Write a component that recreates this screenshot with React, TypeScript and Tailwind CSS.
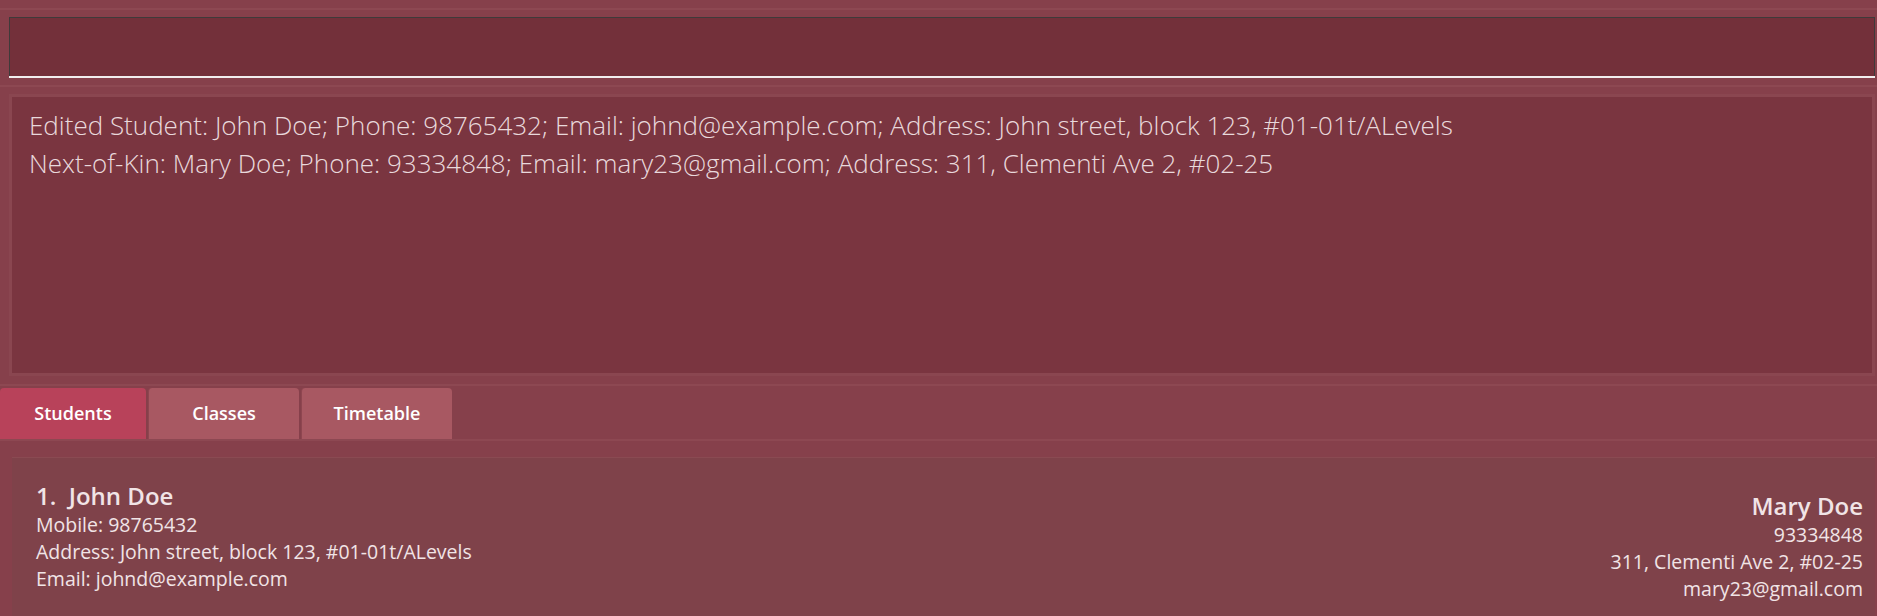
const tabs = ["Students", "Classes", "Timetable"];

function Tab({ label, active }: { label: string; active?: boolean }) {
  return (
    <div
      className={
        "h-[51px] flex items-center justify-center rounded-t-[4px] text-[18px] font-semibold text-white " +
        (active ? "w-[146px] bg-[#b8425a]" : "w-[151px] bg-[#a85862] border-l border-[#8e4650]")
      }
    >
      {label}
    </div>
  );
}

export default function App() {
  return (
    <div
      className="w-full h-[616px] overflow-hidden bg-[#86404b] flex flex-col"
      style={{ fontFamily: '"Open Sans", "Noto Sans", sans-serif' }}
    >
      {/* command box */}
      <div className="mt-[8px] border-t-2 border-[#8d4852] pt-[7px] pl-[9px] pr-[2px]">
        <div className="h-[59px] bg-[#73303a] border border-[#3f3a3a] border-b-0">
          <div className="h-full" />
        </div>
        <div className="h-[2px] bg-[#f2eeee]" />
      </div>

      {/* result display */}
      <div className="mt-[7px] border-t-2 border-[#8d4852] pt-[7px] pl-[9px] pr-[2px]">
        <div className="h-[282px] border-[3px] border-[#8a4650] bg-[#7a3540] px-[17px] pt-[9px] text-[26px] font-light leading-[38px] text-[#e9d9dc]">
          <div>
            Edited Student: John Doe; Phone: 98765432; Email: johnd@example.com; Address: John street, block 123, #01-01t/ALevels
          </div>
          <div>Next-of-Kin: Mary Doe; Phone: 93334848; Email: mary23@gmail.com; Address: 311, Clementi Ave 2, #02-25</div>
        </div>
      </div>

      {/* tabs */}
      <div className="mt-[8px] border-t-2 border-[#8d4852] pt-[2px] border-b-2 border-b-[#8d4852] flex gap-[2px]">
        {tabs.map((t, i) => (
          <Tab key={t} label={t} active={i === 0} />
        ))}
      </div>

      {/* list */}
      <div className="flex-1 mt-[16px] ml-[12px] mr-[2px] border-t border-[#8a4a52] bg-[#7f424a] flex justify-between px-[24px] pt-[22px]">
        <div className="text-[#f1e4e6]">
          <div className="text-[24px] font-semibold leading-[31px]">1.&nbsp; John Doe</div>
          <div className="text-[19.5px] leading-[27px]">Mobile: 98765432</div>
          <div className="text-[19.5px] leading-[27px]">Address: John street, block 123, #01-01t/ALevels</div>
          <div className="text-[19.5px] leading-[27px]">Email: johnd@example.com</div>
        </div>
        <div className="text-right text-[#f1e4e6] pt-[10px] mr-[-12px]">
          <div className="text-[24px] font-semibold leading-[31px]">Mary Doe</div>
          <div className="text-[19.5px] leading-[27px]">93334848</div>
          <div className="text-[19.5px] leading-[27px]">311, Clementi Ave 2, #02-25</div>
          <div className="text-[19.5px] leading-[27px]">mary23@gmail.com</div>
        </div>
      </div>
    </div>
  );
}
